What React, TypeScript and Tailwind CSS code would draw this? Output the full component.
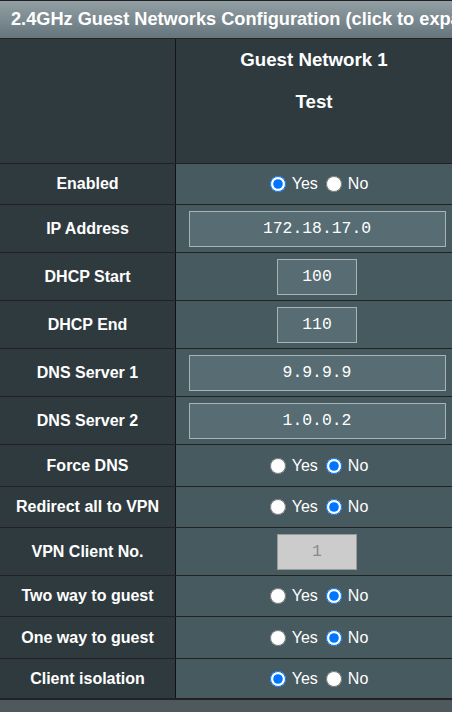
import React from 'react';

type Row =
  | { label: string; kind: 'radio'; yes: boolean; h: string }
  | { label: string; kind: 'input'; value: string; wide: boolean; disabled?: boolean; h: string };

const rows: Row[] = [
  { label: 'Enabled', kind: 'radio', yes: true, h: 'h-[41px]' },
  { label: 'IP Address', kind: 'input', value: '172.18.17.0', wide: true, h: 'h-[48px]' },
  { label: 'DHCP Start', kind: 'input', value: '100', wide: false, h: 'h-[48px]' },
  { label: 'DHCP End', kind: 'input', value: '110', wide: false, h: 'h-[48px]' },
  { label: 'DNS Server 1', kind: 'input', value: '9.9.9.9', wide: true, h: 'h-[48px]' },
  { label: 'DNS Server 2', kind: 'input', value: '1.0.0.2', wide: true, h: 'h-[48px]' },
  { label: 'Force DNS', kind: 'radio', yes: false, h: 'h-[42px]' },
  { label: 'Redirect all to VPN', kind: 'radio', yes: false, h: 'h-[41px]' },
  { label: 'VPN Client No.', kind: 'input', value: '1', wide: false, disabled: true, h: 'h-[48px]' },
  { label: 'Two way to guest', kind: 'radio', yes: false, h: 'h-[41px]' },
  { label: 'One way to guest', kind: 'radio', yes: false, h: 'h-[42px]' },
  { label: 'Client isolation', kind: 'radio', yes: true, h: 'h-[41px]' },
];

function YesNo({ name, yes }: { name: string; yes: boolean }) {
  return (
    <div className="flex items-center pl-[4px] text-[16px] text-white">
      <input type="radio" name={name} defaultChecked={yes} className="m-0 h-[16px] w-[16px]" />
      <span className="ml-[6px] mr-[8px]">Yes</span>
      <input type="radio" name={name} defaultChecked={!yes} className="m-0 h-[16px] w-[16px]" />
      <span className="ml-[6px]">No</span>
    </div>
  );
}

export default function App() {
  return (
    <div className="min-h-screen w-[452px] overflow-hidden bg-[#4d595d] font-['Liberation_Sans',Arial,sans-serif]">
      <div className="h-[39px] border-y border-[#222] bg-gradient-to-b from-[#92a0a5] to-[#66757c] pl-[11px] flex items-center overflow-hidden whitespace-nowrap text-[18.2px] font-bold text-white">
        2.4GHz Guest Networks Configuration (click to expand/collapse)
      </div>

      <div className="flex h-[125px] border-b border-[#222]">
        <div className="w-[176px] shrink-0 border-r border-[#151515] bg-[#2f3a3f]" />
        <div className="flex-1 bg-[#2f3a3f] pt-[10px] text-center text-[18.7px] font-bold leading-[21px] text-white">
          <div>Guest Network 1</div>
          <div className="mt-[21px]">Test</div>
        </div>
      </div>

      {rows.map((r, i) => (
        <div key={r.label} className={`flex ${r.h} border-b border-[#222] ${i === rows.length - 1 ? 'border-b-2' : ''}`}>
          <div className="w-[176px] shrink-0 border-r border-[#111] bg-[#2f3a3f] flex items-center justify-center text-[16px] font-bold text-white">
            {r.label}
          </div>
          <div className="flex-1 bg-[#475a5f] flex items-center justify-center pl-[6px]">
            {r.kind === 'radio' ? (
              <YesNo name={r.label} yes={r.yes} />
            ) : (
              <input
                readOnly
                disabled={r.disabled}
                value={r.value}
                className={`h-[36px] ${r.wide ? 'w-[257px]' : 'w-[80px]'} border text-center text-[16.4px] font-['Liberation_Mono','Courier_New',monospace] outline-none ${
                  r.disabled ? 'border-[#9a9a9a] bg-[#cccccc] text-[#8a8a8a]' : 'border-[#a9b3b6] bg-[#576d73] text-white'
                }`}
              />
            )}
          </div>
        </div>
      ))}
    </div>
  );
}
